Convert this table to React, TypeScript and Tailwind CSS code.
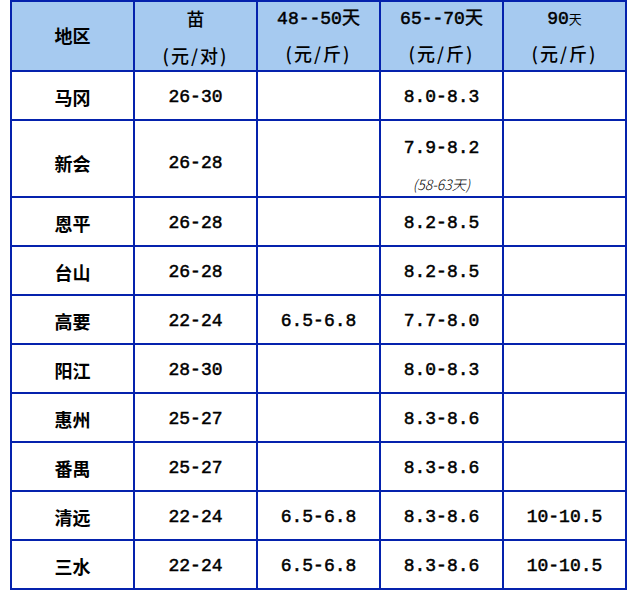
const cjk = "font-['Noto_Sans_CJK_SC',sans-serif]";
const mono = "font-['Liberation_Mono','Noto_Sans_CJK_SC',monospace]";
const stroke = "[-webkit-text-stroke:0.5px_black]";

type Row = { area: string; seed: string; d50: string; d70: string; d90: string; note?: string };

const rows: Row[] = [
  { area: "马冈", seed: "26-30", d50: "", d70: "8.0-8.3", d90: "" },
  { area: "新会", seed: "26-28", d50: "", d70: "7.9-8.2", d90: "", note: "(58-63天)" },
  { area: "恩平", seed: "26-28", d50: "", d70: "8.2-8.5", d90: "" },
  { area: "台山", seed: "26-28", d50: "", d70: "8.2-8.5", d90: "" },
  { area: "高要", seed: "22-24", d50: "6.5-6.8", d70: "7.7-8.0", d90: "" },
  { area: "阳江", seed: "28-30", d50: "", d70: "8.0-8.3", d90: "" },
  { area: "惠州", seed: "25-27", d50: "", d70: "8.3-8.6", d90: "" },
  { area: "番禺", seed: "25-27", d50: "", d70: "8.3-8.6", d90: "" },
  { area: "清远", seed: "22-24", d50: "6.5-6.8", d70: "8.3-8.6", d90: "10-10.5" },
  { area: "三水", seed: "22-24", d50: "6.5-6.8", d70: "8.3-8.6", d90: "10-10.5" },
];

function Head({ top, bottom }: { top: React.ReactNode; bottom?: string }) {
  return (
    <div className="bg-[#a6caf0] h-[68px] flex flex-col items-center justify-center text-[18px] text-black leading-[34px]">
      <div className={`${mono} ${stroke}`}>{top}</div>
      {bottom && <div className={`${cjk} font-medium tracking-[2px]`}>{bottom}</div>}
    </div>
  );
}

function Cell({ children, tall, area }: { children?: React.ReactNode; tall?: boolean; area?: boolean }) {
  return (
    <div
      className={`bg-white flex items-center justify-center text-[18px] text-black ${
        area ? `${cjk} font-bold` : `${mono} ${stroke}`
      } ${tall ? "h-[75px] pt-[9px]" : "h-[47px] pt-[3px]"}`}
    >
      {children}
    </div>
  );
}

export default function App() {
  return (
    <div className="w-[642px] h-[590px] bg-white">
      <div className="ml-[10px] w-[617px] bg-[#0522ad] p-[2px] grid grid-cols-[repeat(5,121px)] gap-[2px]">
        <Head top={<span className={`${cjk} font-bold [-webkit-text-stroke:0px]`}>地区</span>} />
        <Head top={<span className={`${cjk} font-medium [-webkit-text-stroke:0px]`}>苗</span>} bottom="(元/对)" />
        <Head top="48--50天" bottom="(元/斤)" />
        <Head top="65--70天" bottom="(元/斤)" />
        <Head
          top={
            <span>
              90<span className={`${cjk} text-[13px] [-webkit-text-stroke:0px]`}>天</span>
            </span>
          }
          bottom="(元/斤)"
        />
        {rows.map((r) => {
          const tall = !!r.note;
          return [
            <Cell key={r.area + "a"} tall={tall} area>
              {r.area}
            </Cell>,
            <Cell key={r.area + "b"} tall={tall}>
              {r.seed}
            </Cell>,
            <Cell key={r.area + "c"} tall={tall}>
              {r.d50}
            </Cell>,
            r.note ? (
              <div key={r.area + "d"} className="bg-white h-[75px] flex flex-col items-center pt-[10px]">
                <div className={`${mono} ${stroke} text-[18px] leading-[34px] text-black`}>{r.d70}</div>
                <div className={`${cjk} italic text-[14px] leading-[20px] mt-[9px] text-black font-light`}>
                  {r.note}
                </div>
              </div>
            ) : (
              <Cell key={r.area + "d"}>{r.d70}</Cell>
            ),
            <Cell key={r.area + "e"} tall={tall}>
              {r.d90}
            </Cell>,
          ];
        })}
      </div>
    </div>
  );
}
